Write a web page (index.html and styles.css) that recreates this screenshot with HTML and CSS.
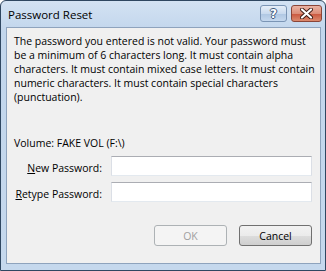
FILE: index.html
```html
<!DOCTYPE html>
<html>
<head>
<meta charset="utf-8">
<link rel="stylesheet" href="styles.css">
</head>
<body>
<div class="window">
  <div class="titlebar">
    <span class="title">Password Reset</span>
    <div class="caption-buttons">
      <button class="cap help" aria-label="Help">?</button>
      <button class="cap close" aria-label="Close">
        <svg width="13" height="11" viewBox="0 0 13 11">
          <path d="M2 1.5 L11 9.5 M11 1.5 L2 9.5" stroke="#3a1a14" stroke-width="4" stroke-linecap="round"/>
          <path d="M2 1.5 L11 9.5 M11 1.5 L2 9.5" stroke="#ffffff" stroke-width="2.2" stroke-linecap="round"/>
        </svg>
      </button>
    </div>
  </div>
  <div class="client">
    <p class="msg">The password you entered is not valid. Your password must<br>be a minimum of 6 characters long. It must contain alpha<br>characters. It must contain mixed case letters. It must contain<br>numeric characters. It must contain special characters<br>(punctuation).</p>
    <p class="volume">Volume: FAKE VOL (F:\)</p>
    <div class="form">
      <label class="lbl" for="np"><u>N</u>ew Password:</label>
      <input class="field" id="np" type="password">
      <label class="lbl" for="rp"><u>R</u>etype Password:</label>
      <input class="field" id="rp" type="password">
    </div>
    <div class="actions">
      <button class="btn" disabled>OK</button>
      <button class="btn default">Cancel</button>
    </div>
  </div>
</div>
</body>
</html>
```
FILE: styles.css
```css
html, body {
  margin: 0;
  padding: 0;
  background: #ffffff;
}
body {
  font-family: "Open Sans", "Noto Sans", sans-serif;
  font-size: 10.5px;
  color: #000;
}
.window {
  width: 326px;
  height: 271px;
  box-sizing: border-box;
  border: 1px solid #2f4761;
  border-radius: 6px 6px 0 0;
  background: linear-gradient(#d3e2f3, #c2d6ec 30px, #c5d8ed);
  padding: 0 4px 6px 5px;
  display: flex;
  flex-direction: column;
}
.titlebar {
  height: 26px;
  display: flex;
  align-items: flex-start;
  justify-content: space-between;
}
.title {
  font-size: 11.5px;
  margin: 6px 0 0 2px;
  color: #000;
}
.caption-buttons {
  display: flex;
  gap: 4px;
  margin-top: 4px;
  margin-right: -1px;
}
.cap {
  height: 17px;
  padding: 0;
  border-radius: 3px;
  display: flex;
  align-items: center;
  justify-content: center;
}
.help {
  width: 27px;
  border: 1px solid #7b95b5;
  background: linear-gradient(#e6eef8, #c9daee 50%, #aec6e2 51%, #c5d8ee);
  color: #fff;
  font-family: "DejaVu Sans", sans-serif;
  font-weight: bold;
  font-size: 12px;
  text-shadow: -1px 0 #3e5a7c, 1px 0 #3e5a7c, 0 -1px #3e5a7c, 0 1px #3e5a7c;
}
.close {
  width: 31px;
  border: 1px solid #8a4538;
  background: linear-gradient(#eab3a4, #dc8d78 50%, #c9553d 51%, #dc8a6e);
}
.client {
  flex: 1;
  background: #f0f0f0;
  border: 1px solid #8ea3bd;
  display: flex;
  flex-direction: column;
}
.msg {
  margin: 6px 0 0 7px;
  line-height: 14px;
}
.volume {
  margin: 32px 0 0 7px;
  line-height: 14px;
}
.form {
  margin-top: 6px;
  display: grid;
  grid-template-columns: 95px 201px;
  column-gap: 9px;
  row-gap: 6px;
  align-items: center;
}
.lbl {
  text-align: right;
  line-height: 14px;
  padding-top: 3px;
}
.field {
  box-sizing: border-box;
  height: 20px;
  margin: 0;
  background: #fff;
  border: 1px solid #dbdfe6;
  border-top-color: #abadb3;
  border-bottom-color: #e3e9ef;
}
.actions {
  margin-top: 23px;
  padding-right: 8px;
  display: flex;
  justify-content: flex-end;
  gap: 12px;
}
.btn {
  box-sizing: border-box;
  width: 73px;
  height: 21px;
  padding: 0;
  border-radius: 3px;
  font-family: inherit;
  font-size: 10.5px;
  border: 1px solid #707070;
  color: #000;
  background: linear-gradient(#f2f2f2, #ebebeb 50%, #dddddd 51%, #cfcfcf);
}
.btn:disabled {
  border-color: #adb2b5;
  color: #a0a0a0;
  background: #f4f4f4;
}
```
